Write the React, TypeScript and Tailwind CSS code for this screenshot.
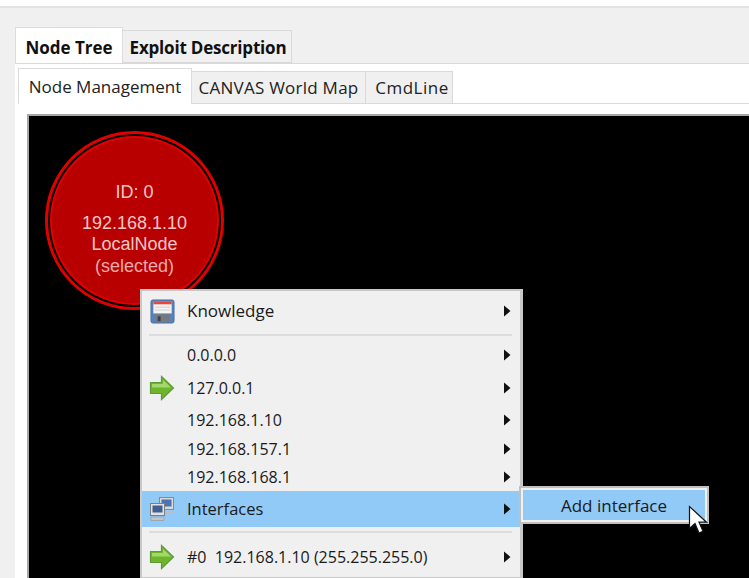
const font = 'font-["Open_Sans","Noto_Sans",sans-serif]';

const Arrow = () => (
  <svg width="8" height="12" viewBox="0 0 8 12" className="shrink-0">
    <path d="M1 .5l6.500 5.500-6.500 5.500z" fill="#111" />
  </svg>
);

const GreenArrow = () => (
  <svg width="26" height="26" viewBox="0 0 26 26">
    <path d="M1.500 7.500h11V1.500L24.500 13 12.500 24.500v-6h-11z" fill="#6fb52c" stroke="#5f9a3a" strokeWidth="1.200" />
    <path d="M3 9h11V5l8 7.500H3z" fill="#a5d76e" />
  </svg>
);

const SaveIcon = () => (
  <svg width="25" height="25" viewBox="0 0 26 26">
    <rect x="1" y="1" width="24" height="24" rx="2" fill="#5a82b8" stroke="#4a6fa5" />
    <rect x="3.500" y="3" width="19" height="12" fill="#f4f4f4" />
    <rect x="3.500" y="3" width="19" height="2.500" fill="#e8483c" />
    <rect x="5" y="8" width="16" height="1" fill="#cfcfcf" />
    <rect x="5" y="11" width="16" height="1" fill="#cfcfcf" />
    <rect x="6" y="16" width="14" height="8" fill="#77797d" />
    <rect x="8" y="18" width="3" height="5" fill="#3f4145" />
  </svg>
);

const NetworkIcon = () => (
  <svg width="26" height="26" viewBox="0 0 26 26">
    <rect x="10.500" y="1.500" width="14" height="12" fill="#d8d8d8" stroke="#8a8a8a" />
    <rect x="12.500" y="3.500" width="10" height="7" fill="#4c73ad" />
    <rect x="11" y="15" width="13" height="3" fill="#bdbdbd" />
    <rect x="1.500" y="7.500" width="14" height="12" fill="#e2e2e2" stroke="#7f7f7f" />
    <rect x="3.500" y="9.500" width="10" height="7" fill="#3f5f95" />
    <rect x="2" y="21" width="13" height="3.500" fill="#c4c4c4" stroke="#8a8a8a" strokeWidth="0.500" />
  </svg>
);

const Cursor = () => (
  <svg width="22" height="30" viewBox="0 0 22 30" className="absolute left-[165px] top-[15px]">
    <path d="M1.500 1.500v22l5.500-5 4 9.500 4-1.800-4-9h7.500z" fill="#fff" stroke="#111" strokeWidth="1.200" />
  </svg>
);

const MenuRow = ({ label, icon, h, size, active }: { label: string; icon?: React.ReactNode; h: string; size: string; active?: boolean }) => (
  <div className={`${h} flex items-center pr-[9px] ${active ? 'bg-[#91c9f7]' : ''}`}>
    <div className="w-[45px] flex justify-center pr-[5px]">{icon}</div>
    <span className={`flex-1 ${size} text-[#1a1a1a] whitespace-pre`}>{label}</span>
    <Arrow />
  </div>
);

const Separator = ({ h }: { h: string }) => (
  <div className={`${h} flex items-center pl-[7px] pr-[8px]`}>
    <div className="w-full h-[2px] bg-[#dcdcdc]" />
  </div>
);

export default function App() {
  return (
    <div className={`w-[749px] h-[578px] overflow-hidden bg-white ${font}`}>
      <div className="h-[8px] border-b-2 border-[#e3e3e3]" />
      <div className="h-[570px] bg-[#f0f0f0] pl-[15px] pt-[19px] flex flex-col">
        <div className="flex items-end h-[36px] text-[17px] font-bold text-[#111]">
          <div className="w-[108px] h-[36px] pt-[5px] bg-white border border-b-0 border-[#dcdcdc] flex items-center justify-center">Node Tree</div>
          <div className="w-[169px] h-[33px] pt-[3px] pl-[2px] tracking-[-0.2px] border border-l-0 border-[#d9d9d9] flex items-center justify-center">Exploit Description</div>
        </div>
        <div className="flex-1 bg-white border-t border-[#d9d9d9] pl-[3px] pt-[4px] flex flex-col">
          <div className="flex items-end h-[36px] text-[17px] text-[#222]">
            <div className="w-[174px] h-[36px] bg-white border border-b-0 border-[#dcdcdc] flex items-center justify-center">Node Management</div>
            <div className="w-[174px] h-[33px] tracking-[0.25px] bg-[#f0f0f0] border border-l-0 border-[#d9d9d9] flex items-center justify-center">CANVAS World Map</div>
            <div className="w-[87px] h-[33px] pl-[6px] tracking-[0.5px] bg-[#f0f0f0] border border-l-0 border-[#d9d9d9] flex items-center justify-center">CmdLine</div>
            <div className="flex-1 h-[1px] bg-[#d9d9d9]" />
          </div>
          <div className="flex-1 pl-[9px] pt-[10px]">
            <div className="relative h-full bg-black border-t-[2px] border-l-[2px] border-[#a6a6a6]">
              <div className="absolute left-[16px] top-[15px] w-[179px] h-[179px] rounded-full border-[3px] border-[#e00000] p-[2px]">
                <div className="w-full h-full rounded-full bg-[#b80000] border-2 border-[#e00000] flex flex-col items-center pt-[44px] font-['Liberation_Sans',sans-serif] text-[18px] leading-[21.500px] text-[#f3c6c6]">
                  <span>ID: 0</span>
                  <span className="mt-[9px]">192.168.1.10</span>
                  <span>LocalNode</span>
                  <span className="text-[#e9aaaa]">(selected)</span>
                </div>
              </div>
              <div className="absolute left-[111px] top-[173px] w-[383px] h-[290px] bg-[#f0f0f0] border-2 border-[#c8c8c8] border-r-[3px]">
                <MenuRow label="Knowledge" icon={<SaveIcon />} h="h-[40px]" size="text-[17px]" />
                <Separator h="h-[7px]" />
                <MenuRow label="0.0.0.0" h="h-[34px]" size="text-[16px]" />
                <MenuRow label="127.0.0.1" icon={<GreenArrow />} h="h-[32px]" size="text-[16px]" />
                <MenuRow label="192.168.1.10" h="h-[31px]" size="text-[16px]" />
                <MenuRow label="192.168.157.1" h="h-[28px]" size="text-[16px]" />
                <MenuRow label="192.168.168.1" h="h-[28px]" size="text-[16px]" />
                <MenuRow label="Interfaces" icon={<NetworkIcon />} h="h-[36px]" size="text-[16.500px]" active />
                <Separator h="h-[10px]" />
                <MenuRow label="#0  192.168.1.10 (255.255.255.0)" icon={<GreenArrow />} h="h-[40px]" size="text-[16px]" />
              </div>
              <div className="absolute left-[490px] top-[370px] w-[190px] h-[38px] bg-[#f0f0f0] border-2 border-[#c0c0c0] p-[2px]">
                <div className="relative h-full pt-[2px] bg-[#91c9f7] flex items-center justify-center text-[17px] text-[#1a1a1a]">
                  Add interface
                  <Cursor />
                </div>
              </div>
            </div>
          </div>
        </div>
      </div>
    </div>
  );
}
